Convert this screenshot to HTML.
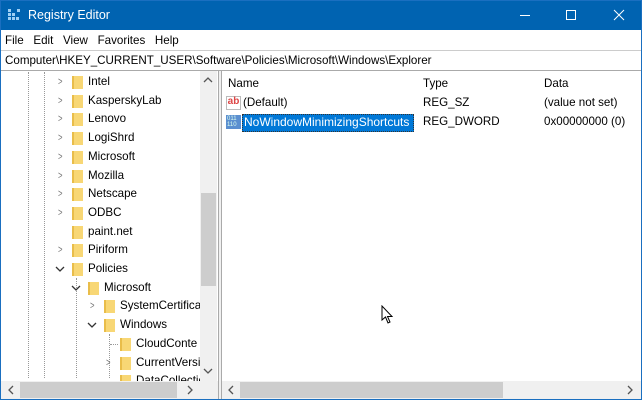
<!DOCTYPE html>
<html><head><style>
*{margin:0;padding:0;box-sizing:border-box}
body{width:642px;height:400px;overflow:hidden;background:#fff;font-family:"Liberation Sans",sans-serif;font-size:11.6px;color:#000;position:relative}
.abs{position:absolute;white-space:nowrap}
#win{position:absolute;left:0;top:0;width:642px;height:400px;border:1px solid #1a6fc0}
#title{position:absolute;left:0;top:0;width:642px;height:30px;background:#0063b1;color:#fff}
.f{position:absolute;width:11px;height:13px;background:#f8d775;border-left:2px solid #e9bd4a}
.ar{position:absolute;color:#777;font-size:11px}
.dot{position:absolute;width:0;border-left:1px dotted #999}
</style></head><body>
<div id="title">
 <svg class="abs" style="left:8px;top:8px" width="14" height="14"><g fill="#9fd0f5"><rect x="0" y="1" width="3" height="3"/><rect x="0" y="5" width="3" height="3"/><rect x="0" y="9" width="3" height="3"/><rect x="4" y="5" width="3" height="3"/><rect x="4" y="9" width="3" height="3"/><rect x="8" y="9" width="3" height="3"/><rect x="9" y="1" width="3" height="3"/></g></svg>
 <div class="abs" style="left:28px;top:8px;font-size:12.5px">Registry Editor</div>
 <div class="abs" style="left:520px;top:15px;width:10px;height:1px;background:#fff"></div>
 <div class="abs" style="left:566px;top:10px;width:10px;height:10px;border:1px solid #fff"></div>
 <svg class="abs" style="left:613px;top:9px" width="12" height="12"><path d="M1 1L11 11M11 1L1 11" stroke="#fff" stroke-width="1"/></svg>
</div>
<div class="abs" style="left:5px;top:34px">File&nbsp;&nbsp; Edit&nbsp;&nbsp; View&nbsp;&nbsp; Favorites&nbsp;&nbsp; Help</div>
<div class="abs" style="left:1px;top:50px;width:640px;height:1px;background:#ccc"></div>
<div class="abs" style="left:5px;top:54px">Computer\HKEY_CURRENT_USER\Software\Policies\Microsoft\Windows\Explorer</div>
<div class="abs" style="left:1px;top:70px;width:640px;height:1px;background:#aaa"></div>
<div class="abs" style="left:218px;top:71px;width:4px;height:328px;background:#f0f0f0;border-left:1px solid #aaa;border-right:1px solid #aaa"></div>
<div class="dot" style="left:28px;top:72px;height:306px"></div>
<div class="dot" style="left:44px;top:72px;height:306px"></div>
<div class="dot" style="left:76px;top:278px;height:100px"></div>
<div class="dot" style="left:109px;top:334px;height:44px"></div>
<div class="dot" style="left:110px;top:344px;height:0;width:8px;border-left:0;border-top:1px dotted #999"></div>
<div id="tree"></div>
<script>
var rows=[["Intel",0,">"],["KasperskyLab",0,">"],["Lenovo",0,">"],["LogiShrd",0,">"],["Microsoft",0,">"],["Mozilla",0,">"],["Netscape",0,">"],["ODBC",0,">"],["paint.net",0,""],["Piriform",0,">"],["Policies",0,"v"],["Microsoft",1,"v"],["SystemCertifica",2,">"],["Windows",2,"v"],["CloudConte",3,""],["CurrentVersi",3,">"],["DataCollection",3,""]];
var h="";
rows.forEach(function(r,i){var y=75+i*18.7;var b=r[1]*16;
if(r[2]==">")h+='<div class="ar" style="left:'+(57+b)+'px;top:'+(y+1)+'px;transform:scaleX(.7)">&gt;</div>';
if(r[2]=="v")h+='<svg class="abs" style="left:'+(55+b)+'px;top:'+(y+4)+'px" width="10" height="7"><path d="M1 1L5 5L9 1" stroke="#333" fill="none" stroke-width="1.3"/></svg>';
h+='<div class="f" style="left:'+(72+b)+'px;top:'+(y+1)+'px"></div>';
h+='<div class="abs" style="left:'+(88+b)+'px;top:'+y+'px">'+r[0]+'</div>';});
document.getElementById('tree').innerHTML=h;
</script>
<div class="abs" style="left:200px;top:71px;width:17px;height:310px;background:#f0f0f0"></div>
<svg class="abs" style="left:203px;top:76px" width="10" height="7"><path d="M1 6L5 2L9 6" stroke="#555" fill="none" stroke-width="1.3"/></svg>
<div class="abs" style="left:201px;top:193px;width:15px;height:93px;background:#cdcdcd"></div>
<svg class="abs" style="left:203px;top:368px" width="10" height="7"><path d="M1 1L5 5L9 1" stroke="#555" fill="none" stroke-width="1.3"/></svg>
<div class="abs" style="left:1px;top:381px;width:217px;height:18px;background:#f0f0f0"></div>
<div class="abs" style="left:20px;top:382px;width:157px;height:16px;background:#cdcdcd"></div>
<svg class="abs" style="left:7px;top:385px" width="7" height="10"><path d="M6 1L2 5L6 9" stroke="#555" fill="none" stroke-width="1.3"/></svg>
<svg class="abs" style="left:187px;top:385px" width="7" height="10"><path d="M1 1L5 5L1 9" stroke="#555" fill="none" stroke-width="1.3"/></svg>
<div class="abs" style="left:228px;top:77px">Name</div>
<div class="abs" style="left:423px;top:77px">Type</div>
<div class="abs" style="left:544px;top:77px">Data</div>
<div class="abs" style="left:226px;top:96px;width:15px;height:14px;border:1px solid #bbb;background:#fff;color:#d44;font-weight:bold;font-size:10px;line-height:10px;text-align:center">ab</div>
<div class="abs" style="left:243px;top:96px">(Default)</div>
<div class="abs" style="left:423px;top:96px">REG_SZ</div>
<div class="abs" style="left:544px;top:96px">(value not set)</div>
<div class="abs" style="left:226px;top:115px;width:15px;height:14px;background:#5b8fd0;color:#dfe;font-size:6px;line-height:6px;padding:1px">011<br>110</div>
<div class="abs" style="left:242px;top:114px;width:172px;height:18px;background:#0078d7;border:1px dotted #333"></div>
<div class="abs" style="left:244px;top:115px;color:#fff;font-size:12px">NoWindowMinimizingShortcuts</div>
<div class="abs" style="left:423px;top:115px">REG_DWORD</div>
<div class="abs" style="left:544px;top:115px">0x00000000 (0)</div>
<svg class="abs" style="left:381px;top:305px" width="14" height="20"><path d="M1 1L1 15L4.5 12L7 18L9 17L6.5 11.5L11 11.5Z" fill="#fff" stroke="#000"/></svg>
<div class="abs" style="left:222px;top:381px;width:419px;height:18px;background:#f0f0f0"></div>
<div class="abs" style="left:240px;top:382px;width:263px;height:16px;background:#cdcdcd"></div>
<svg class="abs" style="left:227px;top:385px" width="7" height="10"><path d="M6 1L2 5L6 9" stroke="#555" fill="none" stroke-width="1.3"/></svg>
<svg class="abs" style="left:627px;top:385px" width="7" height="10"><path d="M1 1L5 5L1 9" stroke="#555" fill="none" stroke-width="1.3"/></svg>
<div id="win"></div>
</body></html>
